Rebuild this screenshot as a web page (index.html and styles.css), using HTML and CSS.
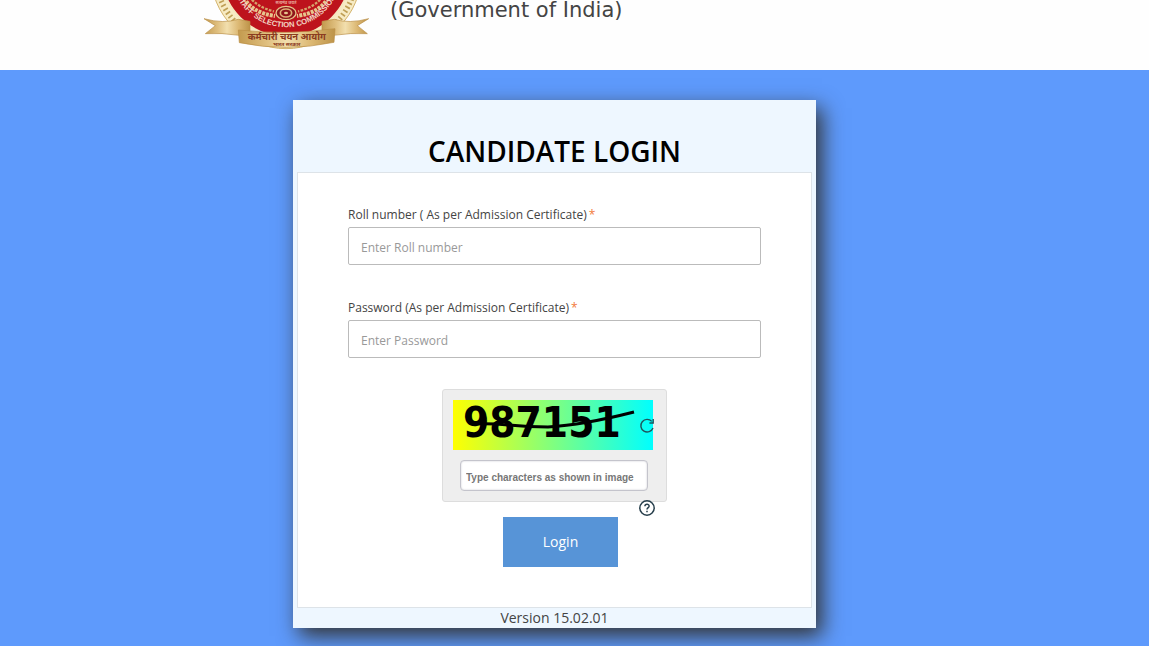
FILE: index.html
```html
<!DOCTYPE html>
<html lang="en">
<head>
    <meta charset="UTF-8">
    <meta name="viewport" content="width=device-width, initial-scale=1.0">
    <title>Candidate Login</title>
    <link rel="stylesheet" href="styles.css">
</head>
<body>
    <header class="banner">
        <svg class="emblem" viewBox="0 0 600 225" role="img" aria-label="Staff Selection Commission emblem">
            <defs>
                <linearGradient id="gold" x1="0" x2="1" y1="0" y2="0">
                    <stop offset="0" stop-color="#c39a4e"/>
                    <stop offset="0.3" stop-color="#e0c080"/>
                    <stop offset="0.5" stop-color="#f2dfae"/>
                    <stop offset="0.75" stop-color="#dcb873"/>
                    <stop offset="1" stop-color="#bd9348"/>
                </linearGradient>
                <path id="ring" d="M122 -84 A166 166 0 0 0 454 -84"/>
            </defs>
            <circle cx="288" cy="-80" r="226" fill="#f7ebc4" stroke="#d3b36c" stroke-width="3"/>
            <circle cx="288" cy="-80" r="211" fill="none" stroke="#bf9f55" stroke-width="16" stroke-dasharray="5 8"/>
            <circle cx="288" cy="-84" r="194" fill="#bd131c" stroke="#f5e7bf" stroke-width="5"/>
            <g fill="none" stroke="#e6c58d" stroke-width="12" stroke-dasharray="9 3">
                <path d="M162 -6 Q186 38 255 48"/>
                <path d="M414 -6 Q390 38 321 48"/>
            </g>
            <g fill="none" stroke="#d6a56c" stroke-width="7" stroke-dasharray="8 4">
                <path d="M178 -10 Q202 22 252 34"/>
                <path d="M398 -10 Q374 22 324 34"/>
            </g>
            <ellipse cx="288" cy="39" rx="30" ry="20" fill="#8f151b" stroke="#e6c58d" stroke-width="4"/>
            <ellipse cx="288" cy="39" rx="17" ry="12" fill="none" stroke="#dcae75" stroke-width="5"/>
            <ellipse cx="288" cy="39" rx="6" ry="4" fill="#e6c58d"/>
            <text class="emblem-motto" x="288" y="13">सत्यमेव जयते</text>
            <text class="emblem-ring"><textPath href="#ring" startOffset="50%">STAFF SELECTION COMMISSION</textPath></text>
            <path d="M42 56 Q100 72 145 58 L180 64 L180 95 L148 106 Q95 98 46 101 L76 77 Z" fill="url(#gold)" stroke="#b98e45" stroke-width="2"/>
            <path d="M536 56 Q478 72 433 58 L396 64 L396 95 L430 106 Q483 98 532 101 L502 77 Z" fill="url(#gold)" stroke="#b98e45" stroke-width="2"/>
            <path d="M145 90 Q288 106 435 86 L432 127 Q288 157 148 128 Z" fill="url(#gold)" stroke="#b98e45" stroke-width="2"/>
            <text class="emblem-name" x="290" y="119">कर्मचारी चयन आयोग</text>
            <text class="emblem-govt" x="290" y="137">भारत सरकार</text>
        </svg>
        <p class="banner-text">(Government of India)</p>
    </header>

    <main class="page">
        <section class="login-card">
            <h1>CANDIDATE LOGIN</h1>
            <form class="login-form">
                <div class="field">
                    <label for="roll">Roll number ( As per Admission Certificate)<span class="required">*</span></label>
                    <input type="text" id="roll" placeholder="Enter Roll number">
                </div>
                <div class="field">
                    <label for="password">Password (As per Admission Certificate)<span class="required">*</span></label>
                    <input type="password" id="password" placeholder="Enter Password">
                </div>
                <div class="captcha">
                    <div class="captcha-image">
                        <svg viewBox="0 0 200 50">
                            <text class="captcha-code" x="10" y="37">987151</text>
                            <path d="M20 24 C50 22 55 27 95 27 Q130 25 181 12" fill="none" stroke="#000" stroke-width="3"/>
                        </svg>
                        <button type="button" class="icon-button refresh" aria-label="Refresh image">
                            <svg viewBox="0 0 16 16" fill="none" stroke="#20545c" stroke-width="1.4">
                                <path d="M12.8 3.4 A6.3 6.3 0 1 0 14 10"/>
                                <path d="M14.2 1 V5 H10.4"/>
                            </svg>
                        </button>
                    </div>
                    <input type="text" id="captcha" aria-label="Captcha" placeholder="Type characters as shown in image">
                    <button type="button" class="icon-button help" aria-label="Help">
                        <svg viewBox="0 0 16 16" fill="none" stroke="#263e4b" stroke-width="1.5">
                            <circle cx="8" cy="8" r="7.2"/>
                            <path d="M5.9 6.2 C6 3.6 10.2 3.7 10.1 6.2 C10 7.6 8 7.7 8 9.6 M8 10.8 V12.3"/>
                        </svg>
                    </button>
                </div>
                <button type="submit" class="login-button">Login</button>
            </form>
            <p class="version">Version 15.02.01</p>
        </section>
    </main>
</body>
</html>
```
FILE: styles.css
```css
* {
    box-sizing: border-box;
}
body {
    margin: 0;
    background: #5e9afc;
    color: #444;
    font-family: "Open Sans", sans-serif;
}
h1, p {
    margin: 0;
}
input, button {
    font-family: inherit;
}
.banner {
    display: flex;
    height: 70px;
    padding-left: 190px;
    background: #fefefe;
    overflow: hidden;
}
.emblem {
    flex: none;
    width: 200px;
    height: 75px;
}
.emblem text {
    font-family: "Noto Sans", sans-serif;
    font-weight: bold;
    text-anchor: middle;
}
.emblem .emblem-motto {
    fill: #e9a59b;
    font-size: 12px;
}
.emblem .emblem-ring {
    fill: #f2d5c4;
    font-family: "Liberation Sans", Arial, sans-serif;
    font-size: 23px;
}
.emblem .emblem-name {
    fill: #8a3b20;
    font-size: 28px;
}
.emblem .emblem-govt {
    fill: #8a3b20;
    font-size: 16px;
}
.banner-text {
    color: #444;
    font-family: "DejaVu Sans", sans-serif;
    font-size: 21px;
    line-height: 20px;
    white-space: nowrap;
}
.page {
    display: flex;
    justify-content: center;
    padding: 30px 40px 18px 0;
}
.login-card {
    width: 100%;
    max-width: 523px;
    padding: 31px 4px 0;
    background: #eef7ff;
    box-shadow: 6px 8px 20px #333;
    text-align: center;
}
h1 {
    margin-bottom: 1px;
    color: #000;
    font-size: 28px;
    font-weight: 600;
    line-height: 40px;
}
.login-form {
    display: flex;
    flex-direction: column;
    align-items: center;
    padding: 33px 50px 40px;
    background: #fff;
    border: 1px solid #dde3e8;
}
.field {
    width: 100%;
    margin-bottom: 31px;
    text-align: left;
}
.field + .field {
    margin-top: 3px;
}
.field label {
    display: block;
    margin-bottom: 3px;
    font-size: 12px;
    line-height: 18px;
}
.required {
    margin-left: 2px;
    color: #f27a3a;
}
.field input {
    display: block;
    width: 100%;
    height: 38px;
    padding: 2px 12px 0;
    border: 1px solid #bbb;
    border-radius: 2px;
    font-size: 12px;
}
.field input::placeholder {
    color: #999;
}
.captcha {
    position: relative;
    width: 225px;
    padding: 10px;
    background: #eee;
    border: 1px solid #ddd;
    border-radius: 3px;
    text-align: left;
}
.captcha-image {
    position: relative;
    width: 200px;
    height: 50px;
    margin-bottom: 10px;
    background: linear-gradient(to right, #ff0, #0ff);
}
.captcha-code {
    font-family: "DejaVu Sans Condensed", "DejaVu Sans", sans-serif;
    font-size: 42px;
    font-weight: bold;
}
.captcha input {
    display: block;
    width: 188px;
    height: 31px;
    margin-left: 7px;
    padding: 3px 5px 0;
    border: 1px solid #c4c4cc;
    border-radius: 4px;
    box-shadow: inset 0 0 2px #c4c4cc;
    font-family: "Liberation Sans", Arial, sans-serif;
    font-size: 10px;
    font-weight: bold;
}
.captcha input::placeholder {
    color: #777;
}
.icon-button {
    position: absolute;
    width: 16px;
    height: 16px;
    padding: 0;
    background: none;
    border: 0;
}
.icon-button svg {
    display: block;
}
.refresh {
    top: 18px;
    right: -2px;
}
.help {
    right: 11px;
    bottom: -15px;
}
.login-button {
    width: 115px;
    height: 50px;
    margin: 15px 0 0 12px;
    padding: 0 0 2px;
    background: #5794d7;
    border: 0;
    color: #fff;
    font-size: 14px;
}
.version {
    font-size: 14px;
    line-height: 20px;
}
```
